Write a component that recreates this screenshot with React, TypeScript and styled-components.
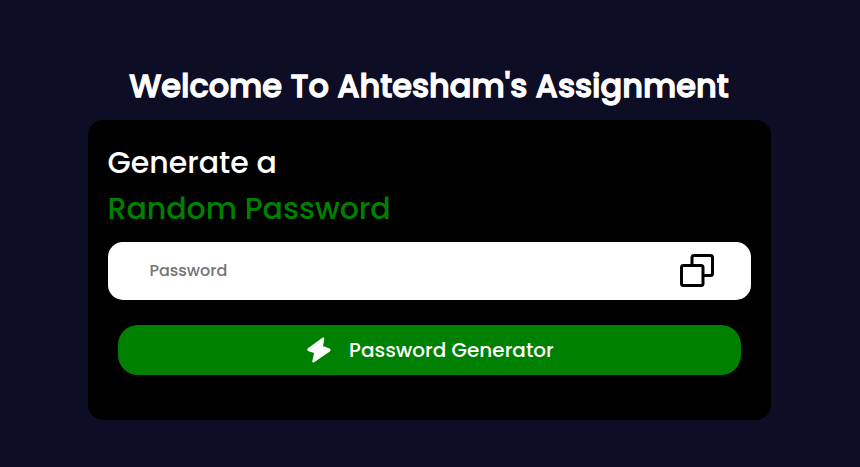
import React, { useState } from "react";
import styled, { createGlobalStyle } from "styled-components";

const GlobalStyle = createGlobalStyle`
  * { box-sizing: border-box; margin: 0; padding: 0; }
  body {
    background: #0d0d26;
    color: #fff;
    font-family: Poppins, Inter, "Open Sans", sans-serif;
  }
`;

const Page = styled.main`
  min-height: 467px;
  display: flex;
  flex-direction: column;
  align-items: center;
  padding: 61px 1px 47px 0;
`;

const Title = styled.h1`
  height: 59px;
  padding-right: 1px;
  font-size: 32px;
  line-height: 49px;
  font-weight: 500;
  -webkit-text-stroke: 1.3px currentColor;
  white-space: nowrap;
`;

const Card = styled.section`
  width: 683px;
  height: 300px;
  padding: 20px;
  border-radius: 15px;
  background: #000;
`;

const Heading = styled.h2<{ $green?: boolean }>`
  height: 46px;
  font-size: 30px;
  line-height: 46px;
  font-weight: 500;
  margin-left: -0.5px;
  color: ${(p) => (p.$green ? "#008000" : "#fff")};
  white-space: nowrap;
`;

const Field = styled.div`
  display: flex;
  align-items: center;
  height: 58px;
  margin-top: 10px;
  padding: 0 37px 0 41.4px;
  border-radius: 15px;
  background: #fff;
`;

const Input = styled.input`
  flex: 1;
  min-width: 0;
  height: 50px;
  padding-bottom: 2px;
  border: 0;
  outline: 0;
  background: transparent;
  color: #000;
  font: inherit;
  font-size: 16px;
  font-weight: 500;
  &::placeholder { color: #757575; opacity: 1; }
`;

const CopyButton = styled.button`
  display: flex;
  border: 0;
  background: transparent;
  color: #000;
  cursor: pointer;
`;

const GenerateButton = styled.button`
  display: flex;
  align-items: center;
  justify-content: flex-start;
  width: 623px;
  height: 50px;
  margin: 25px 10px 0;
  padding-left: 189px;
  gap: 18px;
  border: 0;
  border-radius: 20px;
  background: #008000;
  color: #fff;
  font: inherit;
  font-size: 20px;
  font-weight: 500;
  cursor: pointer;
`;

const Label = styled.span`
  white-space: nowrap;
`;

const CopyIcon = () => (
  <svg width="34" height="34" viewBox="0 0 34 34" fill="none" stroke="currentColor" strokeWidth="3">
    <path d="M12 10V3.500a2 2 0 0 1 2-2h16.500a2 2 0 0 1 2 2v16a2 2 0 0 1-2 2H24" />
    <rect x="1.500" y="11.500" width="21.500" height="20" rx="2" />
  </svg>
);

const BoltIcon = () => (
  <svg width="24" height="26" viewBox="0 0 24 26" fill="currentColor" stroke="currentColor" strokeWidth="2" strokeLinejoin="round">
    <path d="M16.300 1.400 1.600 12q-.7.700.3 1.200L8.300 15.400 6.200 24.600 22.300 13.600q.7-.7-.2-1.200L15 9.600z" />
  </svg>
);

const CHARS = "ABCDEFGHIJKLMNOPQRSTUVWXYZabcdefghijklmnopqrstuvwxyz0123456789!@#$%^&*";

export default function App() {
  const [password, setPassword] = useState("");
  const generate = () =>
    setPassword(Array.from({ length: 12 }, () => CHARS[Math.floor(Math.random() * CHARS.length)]).join(""));

  return (
    <>
      <GlobalStyle />
      <Page>
        <Title>Welcome To Ahtesham's Assignment</Title>
        <Card>
          <Heading>Generate a</Heading>
          <Heading $green>Random Password</Heading>
          <Field>
            <Input placeholder="Password" value={password} readOnly />
            <CopyButton aria-label="Copy" onClick={() => navigator.clipboard?.writeText(password)}>
              <CopyIcon />
            </CopyButton>
          </Field>
          <GenerateButton onClick={generate}>
            <BoltIcon />
            <Label>Password Generator</Label>
          </GenerateButton>
        </Card>
      </Page>
    </>
  );
}
